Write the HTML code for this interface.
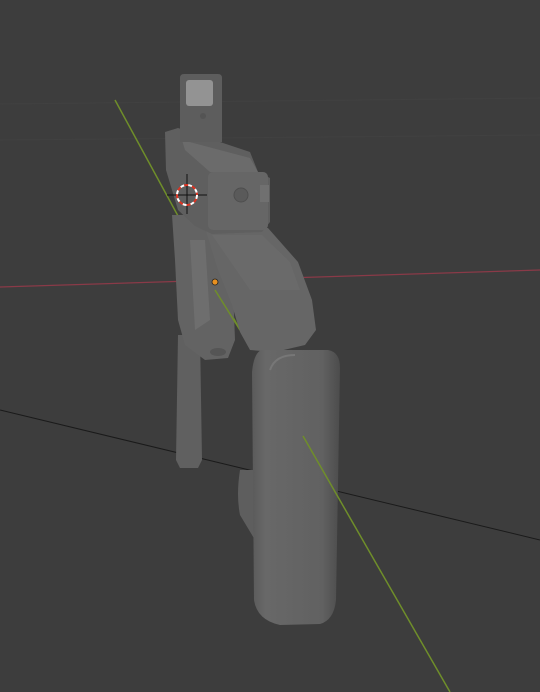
<!DOCTYPE html>
<html><head><style>
html,body{margin:0;padding:0;background:#3d3d3d;width:540px;height:692px;overflow:hidden}
svg{display:block}
</style></head><body>
<svg width="540" height="692" viewBox="0 0 540 692" xmlns="http://www.w3.org/2000/svg">
<defs>
<linearGradient id="st" x1="0" x2="1" y1="0" y2="0">
<stop offset="0" stop-color="#5a5a5a"/><stop offset="0.15" stop-color="#686868"/><stop offset="0.8" stop-color="#616161"/><stop offset="1" stop-color="#4c4c4c"/>
</linearGradient>
</defs>
<rect width="540" height="692" fill="#3d3d3d"/>
<g stroke="#444" stroke-width="1" opacity="0.6">
<line x1="0" y1="140" x2="540" y2="135"/>
<line x1="0" y1="104" x2="540" y2="98"/>
</g>
<line x1="0" y1="287" x2="540" y2="270" stroke="#8a3a48" stroke-width="1.2"/>
<line x1="0" y1="410" x2="540" y2="540" stroke="#1a1a1a" stroke-width="1"/>
<line x1="115" y1="100" x2="240" y2="330" stroke="#6f8e2a" stroke-width="1.5"/>
<!-- magazine leg -->
<path d="M178 335 L200 335 L202 460 L198 468 L180 468 L176 460 Z" fill="#606060"/>
<!-- left body / magazine well -->
<path d="M172 215 L205 215 L232 262 L235 340 L228 358 L205 360 L185 345 L178 320 L175 260 Z" fill="#636363"/>
<path d="M190 240 L205 240 L210 320 L195 330 Z" fill="#6e6e6e"/>
<line x1="215" y1="290" x2="240" y2="330" stroke="#6f8e2a" stroke-width="1.5"/>
<ellipse cx="218" cy="352" rx="8" ry="4" fill="#555"/>
<!-- grip -->
<path d="M205 228 L268 228 L298 262 L312 300 L316 330 L305 345 L275 352 L250 350 L240 332 L232 305 L218 270 Z" fill="#666"/>
<path d="M212 235 L262 235 L290 262 L300 290 L250 290 Z" fill="#6c6c6c" opacity="0.6"/>
<!-- receiver -->
<path d="M165 132 L178 128 L250 152 L258 172 L270 178 L270 222 L262 232 L212 234 L195 226 L178 210 L166 170 Z" fill="#5f5f5f"/>
<path d="M182 140 L250 158 L258 172 L210 172 L185 150 Z" fill="#6b6b6b"/>
<rect x="208" y="172" width="60" height="58" rx="5" fill="#666"/>
<circle cx="241" cy="195" r="7" fill="#5a5a5a" stroke="#4e4e4e"/>
<rect x="260" y="185" width="9" height="17" fill="#707070"/>
<!-- sight -->
<path d="M180 78 Q180 74 184 74 L218 74 Q222 74 222 78 L222 142 L180 142 Z" fill="#5d5d5d"/>
<rect x="186" y="80" width="27" height="26" rx="3" fill="#939393"/>
<circle cx="203" cy="116" r="3" fill="#545454"/>
<!-- stock body lower bulge -->
<path d="M240 470 Q236 495 240 515 L255 540 L256 470 Z" fill="#5e5e5e"/>
<!-- stock -->
<path d="M262 350 L328 350 Q340 352 340 368 L336 600 Q334 620 320 624 L280 625 Q257 620 254 600 L252 372 Q254 352 262 350 Z" fill="url(#st)"/>
<path d="M270 370 Q275 355 295 355" stroke="#777" stroke-width="2" fill="none"/>
<line x1="303" y1="436" x2="450" y2="692" stroke="#6f8e2a" stroke-width="1.5"/>
<!-- origin & cursor -->
<circle cx="215" cy="282" r="3" fill="#e89020" stroke="#222" stroke-width="0.8"/>
<g stroke="#111" stroke-width="1">
<line x1="187" y1="174" x2="187" y2="214"/><line x1="167" y1="195" x2="207" y2="195"/>
</g>
<circle cx="187" cy="195" r="10" fill="none" stroke="#fff" stroke-width="2" stroke-dasharray="4 4"/>
<circle cx="187" cy="195" r="10" fill="none" stroke="#d32" stroke-width="2" stroke-dasharray="4 4" stroke-dashoffset="4"/>
</svg>
</body></html>
